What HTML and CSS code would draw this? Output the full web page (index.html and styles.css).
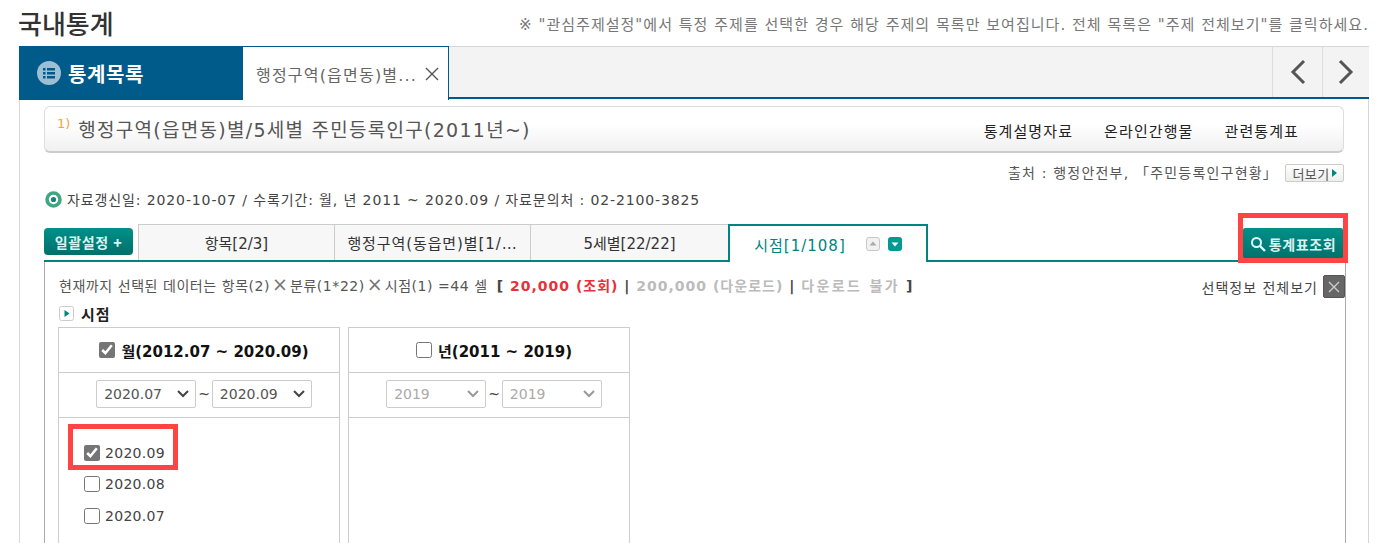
FILE: index.html
```html
<!DOCTYPE html>
<html lang="ko">
<head>
  <meta charset="UTF-8">
  <title>국내통계</title>
  <link rel="stylesheet" href="styles.css">
</head>
<body>
  <div class="page">
    <header class="page-head">
      <h1 class="page-title">국내통계</h1>
      <p class="page-note">※ "관심주제설정"에서 특정 주제를 선택한 경우 해당 주제의 목록만 보여집니다. 전체 목록은 "주제 전체보기"를 클릭하세요.</p>
    </header>

    <div class="shell">
      <div class="top-tabs">
        <div class="list-tab">
          <svg class="list-icon" width="24" height="24" viewBox="0 0 24 24">
            <circle cx="12" cy="12" r="12" fill="#9dbfd3"/>
            <g fill="#005b8a">
              <rect x="6" y="7" width="2.5" height="2.5"/><rect x="10" y="7" width="8" height="2.5"/>
              <rect x="6" y="11" width="2.5" height="2.5"/><rect x="10" y="11" width="8" height="2.5"/>
              <rect x="6" y="15" width="2.5" height="2.5"/><rect x="10" y="15" width="8" height="2.5"/>
            </g>
          </svg>
          <span>통계목록</span>
        </div>
        <div class="open-tab">
          <span class="open-tab-text">행정구역(읍면동)별...</span>
          <svg width="14" height="14" viewBox="0 0 14 14"><path d="M1 1l12 12M13 1L1 13" stroke="#555" stroke-width="1.4" fill="none"/></svg>
        </div>
        <div class="tab-arrows">
          <div class="tab-arrow"><svg width="16" height="26" viewBox="0 0 16 26"><path d="M14 2L3 13l11 11" stroke="#555" stroke-width="3" fill="none"/></svg></div>
          <div class="tab-arrow tab-arrow-last"><svg width="16" height="26" viewBox="0 0 16 26"><path d="M2 2l11 11L2 24" stroke="#555" stroke-width="3" fill="none"/></svg></div>
        </div>
      </div>

      <div class="content">
        <div class="title-box">
          <h2 class="stat-title"><sup class="stat-note">1)</sup>행정구역(읍면동)별/5세별 주민등록인구(2011년~)</h2>
          <nav class="stat-links">
            <a>통계설명자료</a>
            <a>온라인간행물</a>
            <a>관련통계표</a>
          </nav>
        </div>

        <div class="source-row">
          <span class="source-text">출처 : 행정안전부, 「주민등록인구현황」</span>
          <button class="more-btn">더보기<svg width="5" height="8" viewBox="0 0 5 8"><path d="M0 0l5 4-5 4z" fill="#00857e"/></svg></button>
        </div>

        <div class="update-row">
          <svg width="17" height="17" viewBox="0 0 17 17"><circle cx="8.5" cy="8.5" r="6.5" fill="#fff" stroke="#3fa67f" stroke-width="3.5"/><circle cx="8.5" cy="8.5" r="2.6" fill="#1f7f78"/></svg>
          <span>자료갱신일: 2020-10-07 / 수록기간: 월, 년 2011 ~ 2020.09 / 자료문의처 : 02-2100-3825</span>
        </div>

        <div class="tab-row">
          <button class="bulk-btn">일괄설정 <b>+</b></button>
          <div class="tab">항목[2/3]</div>
          <div class="tab tab-clip">행정구역(동읍면)별[1/…</div>
          <div class="tab">5세별[22/22]</div>
          <div class="tab tab-active">
            <span>시점[1/108]</span>
            <span class="sort-btns">
              <svg width="14" height="14" viewBox="0 0 14 14"><rect x=".5" y=".5" width="13" height="13" rx="2.5" fill="#f1f1f1" stroke="#c8c8c8"/><path d="M7 4.5l3.5 4h-7z" fill="#aaa"/></svg>
              <svg width="14" height="14" viewBox="0 0 14 14"><rect width="14" height="14" rx="3" fill="#009a93"/><path d="M7 9.5l-3.5-4h7z" fill="#fff"/></svg>
            </span>
          </div>
          <div class="search-wrap">
            <button class="search-btn">
              <svg width="16" height="16" viewBox="0 0 16 16"><circle cx="6.5" cy="6.5" r="4.5" fill="none" stroke="#dff" stroke-width="2"/><path d="M10 10l5 5" stroke="#dff" stroke-width="2.4"/></svg>
              통계표조회
            </button>
            <span class="mark mark-search"></span>
          </div>
        </div>

        <div class="panel">
          <div class="summary-row">
            <p class="summary">현재까지 선택된 데이터는 항목(2)<span class="times">×</span>분류(1*22)<span class="times">×</span>시점(1) =44 셀 <span class="sum-group">[ <em class="red">20,000 (조회)</em> | <em class="gray">200,000 (다운로드)</em> | <em class="gray sum-tail">다운로드 불가</em> ]</span></p>
            <div class="sel-all">
              <span>선택정보 전체보기</span>
              <button class="close-btn"><svg width="12" height="12" viewBox="0 0 12 12"><path d="M1 1l10 10M11 1L1 11" stroke="#ccc" stroke-width="1.4" fill="none"/></svg></button>
            </div>
          </div>

          <h3 class="section-title">
            <svg width="15" height="15" viewBox="0 0 15 15"><rect x=".5" y=".5" width="14" height="14" rx="2" fill="#fff" stroke="#ccc"/><path d="M5.5 4l5 3.5-5 3.5z" fill="#00857e"/></svg>
            시점
          </h3>

          <div class="cols">
            <section class="col">
              <label class="col-head"><input type="checkbox" checked>월(2012.07 ~ 2020.09)</label>
              <div class="col-range">
                <select><option>2020.07</option></select>
                <span>~</span>
                <select><option>2020.09</option></select>
              </div>
              <ul class="col-list">
                <li class="col-item"><input type="checkbox" checked>2020.09<span class="mark mark-item"></span></li>
                <li class="col-item"><input type="checkbox">2020.08</li>
                <li class="col-item"><input type="checkbox">2020.07</li>
              </ul>
            </section>
            <section class="col">
              <label class="col-head"><input type="checkbox">년(2011 ~ 2019)</label>
              <div class="col-range">
                <select disabled><option>2019</option></select>
                <span>~</span>
                <select disabled><option>2019</option></select>
              </div>
              <ul class="col-list"></ul>
            </section>
          </div>
        </div>
      </div>
    </div>
  </div>
</body>
</html>
```

FILE: styles.css
```css
html, body {
  margin: 0;
  height: 100%;
  overflow: hidden;
}
body {
  background: #fff;
  color: #444;
  font-family: "DejaVu Sans", "Noto Sans CJK KR", sans-serif;
  font-size: 14px;
}
button {
  font-family: inherit;
  cursor: pointer;
}
.page {
  width: 1350px;
  margin-left: 19px;
}

/* head */
.page-head {
  display: flex;
  justify-content: space-between;
  align-items: center;
  height: 46px;
}
.page-title {
  margin: -2px 0 0 -1px;
  font-family: "Noto Sans CJK KR", sans-serif;
  font-size: 26px;
  font-weight: 500;
  color: #333;
}
.page-note {
  margin: 0;
  font-size: 15px;
  letter-spacing: 1.03px;
  color: #777;
  white-space: nowrap;
}

/* top tabs */
.shell {
  border-left: 1px solid #d5d5dd;
  border-right: 1px solid #d5d5dd;
}
.top-tabs {
  display: flex;
  height: 50px;
  margin-left: -1px;
  margin-right: -1px;
  background: #f3f3f3;
  border-top: 1px solid #d5d5dd;
  border-bottom: 2px solid #005b8a;
}
.list-tab {
  display: flex;
  align-items: center;
  gap: 7px;
  width: 206px;
  padding-left: 18px;
  height: 54px;
  margin-top: -1px;
  background: #005b8a;
  color: #fff;
  font-family: "Noto Sans CJK KR", sans-serif;
  font-size: 20px;
  font-weight: 700;
  letter-spacing: 0.6px;
}
.open-tab {
  display: flex;
  align-items: center;
  gap: 8px;
  box-sizing: border-box;
  width: 206px;
  height: 54px;
  margin-top: -1px;
  padding-left: 13px;
  background: #fff;
  border-top: 1px solid #005b8a;
  border-right: 1px solid #005b8a;
  color: #666;
  font-size: 16px;
  letter-spacing: 1.2px;
  white-space: nowrap;
}
.tab-arrows {
  display: flex;
  margin-left: auto;
}
.tab-arrow {
  display: flex;
  align-items: center;
  justify-content: center;
  width: 49px;
  border-left: 1px solid #ddd;
}
.tab-arrow-last {
  width: 46px;
}

/* title box */
.content {
  padding: 7px 24px 0;
}
.title-box {
  display: flex;
  justify-content: space-between;
  align-items: center;
  box-sizing: border-box;
  height: 47px;
  padding: 0 44px 0 12px;
  border: 1px solid #ddd;
  border-bottom: 2px solid #ccc;
  border-radius: 6px;
  background: linear-gradient(#fff 40%, #f0f0f0);
}
.stat-title {
  margin: 0 0 2px;
  font-size: 19px;
  font-weight: 400;
  letter-spacing: 1.27px;
  color: #555;
}
.stat-note {
  margin-right: 8px;
  font-size: 13px;
  line-height: 0;
  vertical-align: 9px;
  letter-spacing: 0;
  color: #f5a23c;
}
.stat-links {
  display: flex;
  gap: 31px;
  margin-top: 2px;
  color: #222;
  font-size: 15px;
  letter-spacing: 1.1px;
}

.source-row {
  display: flex;
  justify-content: flex-end;
  align-items: center;
  gap: 7px;
  height: 18px;
  margin-top: 11px;
  color: #555;
}
.source-text {
  padding-bottom: 2px;
  letter-spacing: 1.2px;
}
.more-btn {
  display: flex;
  align-items: center;
  justify-content: center;
  gap: 2px;
  width: 59px;
  height: 18px;
  padding: 0;
  border: 1px solid #ccc;
  border-radius: 2px;
  background: linear-gradient(#fff, #eee);
  color: #555;
  font-size: 13px;
  letter-spacing: 0.4px;
}
.update-row {
  display: flex;
  align-items: center;
  gap: 5px;
  height: 18px;
  margin-top: 8px;
  margin-left: 1px;
  color: #444;
  letter-spacing: 0.88px;
}

/* tabs above panel */
.tab-row {
  display: flex;
  align-items: flex-end;
  height: 36px;
  margin-top: 16px;
  margin-right: -2px;
  border-bottom: 2px solid #00857e;
}
.bulk-btn {
  align-self: flex-start;
  width: 89px;
  height: 27px;
  margin: 4px 5px 0 0;
  padding: 0;
  border: 0;
  border-radius: 4px;
  background: linear-gradient(#009089, #00706b);
  color: #d9f3f0;
  font-size: 14px;
  font-weight: 700;
  letter-spacing: 0.6px;
  font-family: "Noto Sans CJK KR", sans-serif;
}
.tab {
  display: flex;
  align-items: center;
  justify-content: center;
  box-sizing: border-box;
  width: 196px;
  height: 36px;
  border: 1px solid #ccc;
  border-bottom: 0;
  border-left-width: 0;
  background: #f7f7f7;
  color: #333;
  font-size: 15px;
  white-space: nowrap;
}
.tab:nth-of-type(1) {
  width: 197px;
  border-left-width: 1px;
}
.tab:nth-of-type(3) {
  width: 198px;
}
.tab-clip {
  letter-spacing: 0.9px;
}
.tab-active {
  gap: 20px;
  width: 200px;
  height: 38px;
  margin: 0 0 -2px -1px;
  border: 2px solid #00857e;
  border-bottom: 0;
  background: #fff;
  color: #00857e;
  letter-spacing: 1px;
}
.sort-btns {
  display: flex;
  gap: 8px;
}
.search-wrap {
  position: relative;
  margin-left: auto;
  margin-right: 3px;
  align-self: flex-start;
  margin-top: 4px;
}
.search-btn {
  display: flex;
  align-items: center;
  justify-content: center;
  gap: 3px;
  width: 100px;
  height: 31px;
  padding: 0;
  border: 0;
  border-radius: 2px;
  background: linear-gradient(#009089, #00706b);
  color: #d9f3f0;
  font-family: "Noto Sans CJK KR", sans-serif;
  font-size: 14px;
  font-weight: 700;
  letter-spacing: 0.6px;
}

/* red annotation boxes */
.mark {
  position: absolute;
  box-sizing: border-box;
  border: 5px solid #ff4444;
}
.mark-search {
  left: -5px;
  right: -5px;
  top: -15px;
  bottom: -4px;
}
.mark-item {
  left: -16px;
  right: -14px;
  top: -13px;
  bottom: -1px;
}

/* panel */
.panel {
  box-sizing: border-box;
  margin-right: -2px;
  height: 400px;
  padding: 13px 0 0 14px;
  border-left: 1px solid #aaa;
  border-right: 1px solid #aaa;
}
.summary-row {
  display: flex;
  justify-content: space-between;
  align-items: center;
  height: 23px;
}
.summary {
  margin: 0 0 4px;
  font-size: 14px;
  letter-spacing: 0.55px;
  color: #555;
  white-space: nowrap;
}
.times {
  margin: 0 2px;
  font-size: 19px;
  line-height: 0;
  letter-spacing: 0;
  color: #777;
}
.sum-group {
  margin-left: 4px;
  font-weight: 700;
  letter-spacing: 1px;
  color: #444;
}
.summary em {
  font-style: normal;
}
.red {
  color: #e8303a;
}
.gray {
  color: #bbb;
}
.sum-tail {
  letter-spacing: 2.4px;
}
.sel-all {
  display: flex;
  align-items: center;
  gap: 5px;
  font-size: 14px;
  letter-spacing: 1px;
}
.close-btn {
  display: flex;
  align-items: center;
  justify-content: center;
  width: 22px;
  height: 23px;
  padding: 0;
  border: 1px solid #555;
  border-radius: 2px;
  background: #666;
}
.section-title {
  display: flex;
  align-items: center;
  gap: 7px;
  height: 15px;
  margin: 8px 0 6px;
  font-family: "Noto Sans CJK KR", sans-serif;
  font-size: 15px;
  font-weight: 700;
  letter-spacing: 1px;
  color: #222;
}
.cols {
  display: flex;
  gap: 8px;
  margin-left: -1px;
}
.col {
  box-sizing: border-box;
  width: 282px;
  height: 300px;
  border: 1px solid #ccc;
}
.col-head {
  display: flex;
  align-items: center;
  justify-content: center;
  gap: 6px;
  box-sizing: border-box;
  height: 45px;
  padding-left: 10px;
  border-bottom: 1px solid #ccc;
  font-size: 15px;
  font-weight: 700;
  color: #111;
}
.col input {
  flex: none;
  width: 16px;
  height: 16px;
  margin: 0;
  accent-color: #757575;
}
.col-range {
  display: flex;
  align-items: center;
  justify-content: center;
  gap: 2px;
  box-sizing: border-box;
  height: 45px;
  padding: 0 0 2px 10px;
  border-bottom: 1px solid #ccc;
}
.col-range select {
  appearance: none;
  box-sizing: border-box;
  width: 100px;
  height: 28px;
  padding: 0 7px;
  border: 1px solid #ccc;
  border-radius: 2px;
  color: #555;
  font-family: inherit;
  font-size: 14px;
  background: #fff url("data:image/svg+xml,%3Csvg xmlns='http://www.w3.org/2000/svg' width='12' height='8'%3E%3Cpath d='M1 1l5 5 5-5' fill='none' stroke='%23444' stroke-width='2'/%3E%3C/svg%3E") no-repeat right 6px center;
}
.col-range select:disabled {
  color: #aaa;
  opacity: 1;
  background-image: url("data:image/svg+xml,%3Csvg xmlns='http://www.w3.org/2000/svg' width='12' height='8'%3E%3Cpath d='M1 1l5 5 5-5' fill='none' stroke='%23999' stroke-width='2'/%3E%3C/svg%3E");
}
.col-list {
  margin: 0;
  padding: 19px 0 0 25px;
  list-style: none;
}
.col-item {
  position: relative;
  display: flex;
  align-items: center;
  gap: 5px;
  width: 80px;
  height: 31.5px;
  color: #444;
  letter-spacing: 0.3px;
  white-space: nowrap;
}
```
